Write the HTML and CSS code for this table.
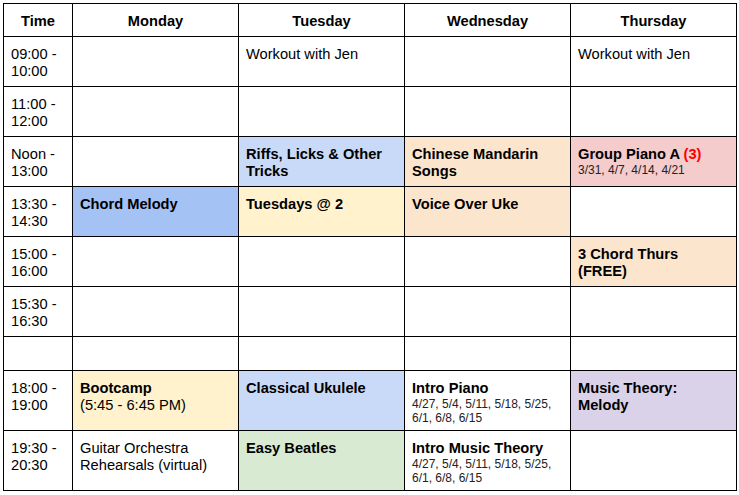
FILE: index.html
```html
<!DOCTYPE html>
<html>
<head>
<meta charset="utf-8">
<link rel="stylesheet" href="styles.css">
</head>
<body>
<table class="sched">
  <colgroup>
    <col class="c-time"><col class="c-day"><col class="c-day"><col class="c-day"><col class="c-day">
  </colgroup>
  <tr class="r-head">
    <th>Time</th><th>Monday</th><th>Tuesday</th><th>Wednesday</th><th>Thursday</th>
  </tr>
  <tr class="r-std">
    <td>09:00 -<br>10:00</td><td></td><td>Workout with Jen</td><td></td><td>Workout with Jen</td>
  </tr>
  <tr class="r-std">
    <td>11:00 -<br>12:00</td><td></td><td></td><td></td><td></td>
  </tr>
  <tr class="r-std">
    <td>Noon -<br>13:00</td>
    <td></td>
    <td class="bg-lblue"><b>Riffs, Licks &amp; Other Tricks</b></td>
    <td class="bg-orange"><b>Chinese Mandarin Songs</b></td>
    <td class="bg-red"><b>Group Piano A <span class="red">(3)</span></b><div class="small">3/31, 4/7, 4/14, 4/21</div></td>
  </tr>
  <tr class="r-std">
    <td>13:30 -<br>14:30</td>
    <td class="bg-blue"><b>Chord Melody</b></td>
    <td class="bg-yellow"><b>Tuesdays @ 2</b></td>
    <td class="bg-orange"><b>Voice Over Uke</b></td>
    <td></td>
  </tr>
  <tr class="r-std">
    <td>15:00 -<br>16:00</td><td></td><td></td><td></td>
    <td class="bg-orange"><b>3 Chord Thurs<br>(FREE)</b></td>
  </tr>
  <tr class="r-std">
    <td>15:30 -<br>16:30</td><td></td><td></td><td></td><td></td>
  </tr>
  <tr class="r-empty">
    <td></td><td></td><td></td><td></td><td></td>
  </tr>
  <tr class="r-tall">
    <td>18:00 -<br>19:00</td>
    <td class="bg-yellow"><b>Bootcamp</b><br>(5:45 - 6:45 PM)</td>
    <td class="bg-lblue"><b>Classical Ukulele</b></td>
    <td><b>Intro Piano</b><div class="small">4/27, 5/4, 5/11, 5/18, 5/25, 6/1, 6/8, 6/15</div></td>
    <td class="bg-purple"><b>Music Theory:<br>Melody</b></td>
  </tr>
  <tr class="r-tall">
    <td>19:30 -<br>20:30</td>
    <td>Guitar Orchestra Rehearsals (virtual)</td>
    <td class="bg-green"><b>Easy Beatles</b></td>
    <td><b>Intro Music Theory</b><div class="small">4/27, 5/4, 5/11, 5/18, 5/25, 6/1, 6/8, 6/15</div></td>
    <td></td>
  </tr>
</table>
</body>
</html>
```
FILE: styles.css
```css
html, body {
  margin: 0;
  padding: 0;
  background: #fff;
}
body {
  padding: 3px 0 0 3px;
  font-family: "Liberation Sans", Arial, sans-serif;
  font-size: 14.67px;
  line-height: 17px;
  color: #000;
}
.sched {
  border-collapse: collapse;
  table-layout: fixed;
  width: 734px;
}
.c-time { width: 69px; }
.c-day { width: 166px; }
.sched th, .sched td {
  border: 1px solid #000;
  padding: 9px 7px 5px 7px;
  vertical-align: top;
  text-align: left;
}
.sched th {
  text-align: center;
  font-weight: bold;
}
.r-head { height: 33px; }
.r-std { height: 50px; }
.r-empty { height: 34px; }
.r-tall { height: 60px; }
b { font-weight: bold; }
.small {
  font-size: 12px;
  line-height: 14px;
  color: #222;
}
.red { color: #ff0000; }
.bg-blue { background: #a4c2f4; }
.bg-lblue { background: #c9daf8; }
.bg-yellow { background: #fff2cc; }
.bg-orange { background: #fce5cd; }
.bg-red { background: #f4cccc; }
.bg-green { background: #d9ead3; }
.bg-purple { background: #d9d2e9; }
```
